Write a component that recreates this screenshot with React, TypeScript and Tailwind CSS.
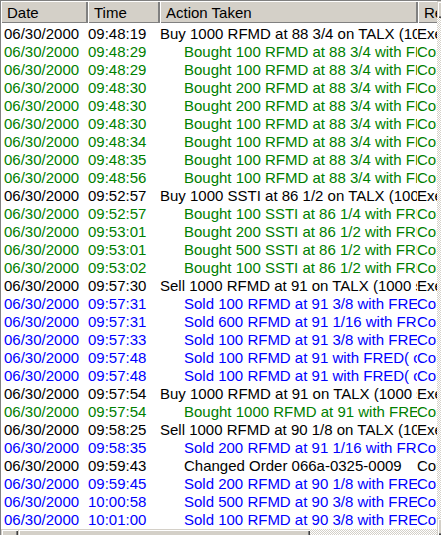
import React from "react";

type Row = { d: string; t: string; a: string; r: string; c: "k" | "g" | "b"; ind: boolean };

const raw: [string, "k" | "g" | "b", string, string][] = [
  ["09:48:19", "k", "Buy 1000 RFMD at 88 3/4 on TALX (1000 shares)", "Executed"],
  ["09:48:29", "g", "Bought 100 RFMD at 88 3/4 with FRED (c)", "Completed"],
  ["09:48:29", "g", "Bought 100 RFMD at 88 3/4 with FRED (c)", "Completed"],
  ["09:48:30", "g", "Bought 200 RFMD at 88 3/4 with FRED (c)", "Completed"],
  ["09:48:30", "g", "Bought 200 RFMD at 88 3/4 with FRED (c)", "Completed"],
  ["09:48:30", "g", "Bought 100 RFMD at 88 3/4 with FRED (c)", "Completed"],
  ["09:48:34", "g", "Bought 100 RFMD at 88 3/4 with FRED (c)", "Completed"],
  ["09:48:35", "g", "Bought 100 RFMD at 88 3/4 with FRED (c)", "Completed"],
  ["09:48:56", "g", "Bought 100 RFMD at 88 3/4 with FRED (c)", "Completed"],
  ["09:52:57", "k", "Buy 1000 SSTI at 86 1/2 on TALX (1000 shares)", "Executed"],
  ["09:52:57", "g", "Bought 100 SSTI at 86 1/4 with FRED (c)", "Completed"],
  ["09:53:01", "g", "Bought 200 SSTI at 86 1/2 with FRED (c)", "Completed"],
  ["09:53:01", "g", "Bought 500 SSTI at 86 1/2 with FRED (c)", "Completed"],
  ["09:53:02", "g", "Bought 100 SSTI at 86 1/2 with FRED (c)", "Completed"],
  ["09:57:30", "k", "Sell 1000 RFMD at 91 on TALX (1000 shares)", "Executed"],
  ["09:57:31", "b", "Sold 100 RFMD at 91 3/8 with FRED (c)", "Completed"],
  ["09:57:31", "b", "Sold 600 RFMD at 91 1/16 with FRED (c)", "Completed"],
  ["09:57:33", "b", "Sold 100 RFMD at 91 3/8 with FRED (c)", "Completed"],
  ["09:57:48", "b", "Sold 100 RFMD at 91 with FRED( c)", "Completed"],
  ["09:57:48", "b", "Sold 100 RFMD at 91 with FRED( c)", "Completed"],
  ["09:57:54", "k", "Buy 1000 RFMD at 91 on TALX (1000 shares)", "Executed"],
  ["09:57:54", "g", "Bought 1000 RFMD at 91 with FRED (c)", "Completed"],
  ["09:58:25", "k", "Sell 1000 RFMD at 90 1/8 on TALX (1000 shares)", "Executed"],
  ["09:58:35", "b", "Sold 200 RFMD at 91 1/16 with FRED (c)", "Completed"],
  ["09:59:43", "k", "Changed Order 066a-0325-0009", "Completed"],
  ["09:59:45", "b", "Sold 200 RFMD at 90 1/8 with FRED (c)", "Completed"],
  ["10:00:58", "b", "Sold 500 RFMD at 90 3/8 with FRED (c)", "Completed"],
  ["10:01:00", "b", "Sold 100 RFMD at 90 3/8 with FRED (c)", "Completed"],
];

const rows: Row[] = raw.map(([t, c, a, r]) => ({
  d: "06/30/2000",
  t,
  a,
  r,
  c,
  ind: c !== "k" || a.startsWith("Changed"),
}));

const colorCls: Record<string, string> = {
  k: "text-black",
  g: "text-[#008000]",
  b: "text-[#0000ff]",
};

const hdr =
  "shrink-0 h-[22px] bg-[#d4d0c8] pl-[6px] pt-[3px] overflow-hidden whitespace-nowrap shadow-[inset_1px_1px_0_#ffffff,inset_-2px_-1px_0_#808080]";

const btn =
  "shrink-0 bg-[#d4d0c8] shadow-[inset_1px_1px_0_#d4d0c8,inset_2px_2px_0_#ffffff,inset_-1px_-1px_0_#404040,inset_-2px_-2px_0_#808080]";

const dither =
  "bg-[repeating-conic-gradient(#d4d0c8_0%_25%,#ffffff_0%_50%)] bg-[length:2px_2px]";

export default function App() {
  return (
    <div className="w-[441px] h-[535px] overflow-hidden bg-white font-['Liberation_Sans',Arial,sans-serif] text-[15px] leading-[17px] border-l border-t border-[#808080]">
      <div className="flex h-full">
        <div className="w-[436px] shrink-0 flex flex-col overflow-hidden">
          <div className="flex shrink-0">
            <div className={`${hdr} w-[87px]`}>Date</div>
            <div className={`${hdr} w-[72px]`}>Time</div>
            <div className={`${hdr} w-[258px]`}>Action Taken</div>
            <div className={`${hdr} w-[80px]`}>Result</div>
          </div>
          <div className="pt-[2px] shrink-0">
            {rows.map((r, i) => (
              <div key={i} className={`flex h-[18px] leading-[18px] whitespace-nowrap ${colorCls[r.c]}`}>
                <div className="w-[87px] shrink-0 pl-[3px] overflow-hidden">{r.d}</div>
                <div className="w-[72px] shrink-0 overflow-hidden">{r.t}</div>
                <div className={`w-[257px] shrink-0 overflow-hidden ${r.ind ? "pl-[24px]" : ""}`}>{r.a}</div>
                <div className="w-[80px] shrink-0 overflow-hidden">{r.r}</div>
              </div>
            ))}
          </div>
          <div className="flex h-[17px] shrink-0">
            <div className={`${btn} w-[17px] h-[17px]`} />
            <div className={`${btn} w-[292px] h-[17px]`} />
            <div className={`flex-1 h-[17px] ${dither}`} />
          </div>
        </div>
        <div className="w-[17px] shrink-0 flex flex-col">
          <div className={`${btn} h-[17px] w-[17px]`} />
          <div className={`flex-1 ${dither}`} />
          <div className={`${btn} h-[17px] w-[17px]`} />
        </div>
      </div>
    </div>
  );
}
